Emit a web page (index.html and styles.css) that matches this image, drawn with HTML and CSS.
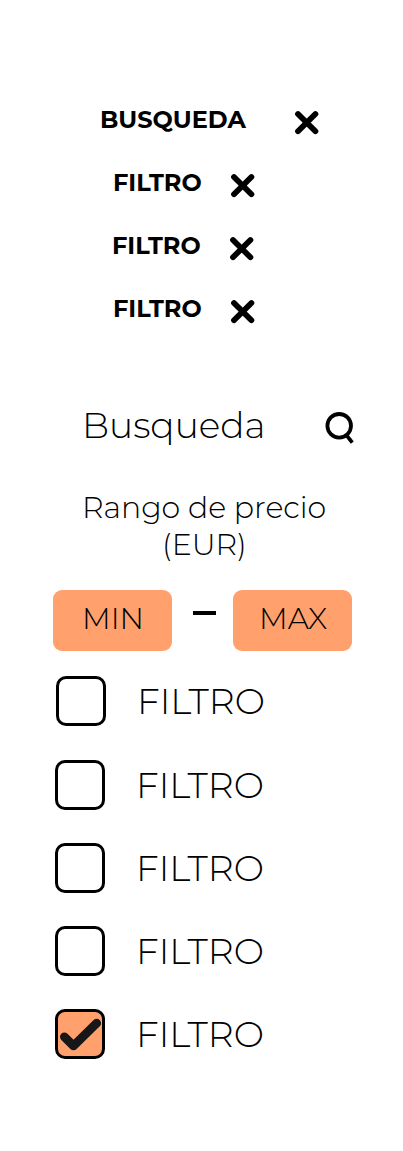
FILE: index.html
```
<!DOCTYPE html>
<html lang="es">
<head>
<meta charset="utf-8">
<title>Filtros</title>
<link rel="stylesheet" href="styles.css">
</head>
<body>
<svg class="defs" aria-hidden="true">
  <symbol id="close" viewBox="0 0 24 24" overflow="visible"><path d="M3 4L20.4 21.2M20.4 4L3 21.2" stroke="#000" stroke-width="5.8" stroke-linecap="round"/></symbol>
</svg>
<main class="panel">
  <section class="chips">
    <div class="chip chip-search"><span class="chip-label chip-label-search">BUSQUEDA</span><svg class="close"><use href="#close"/></svg></div>
    <div class="chip"><span class="chip-label">FILTRO</span><svg class="close"><use href="#close"/></svg></div>
    <div class="chip chip-shifted"><span class="chip-label">FILTRO</span><svg class="close"><use href="#close"/></svg></div>
    <div class="chip"><span class="chip-label">FILTRO</span><svg class="close"><use href="#close"/></svg></div>
  </section>
  <section class="search">
    <span class="search-label">Busqueda</span>
    <svg class="magnifier" viewBox="0 0 30 33"><circle cx="14.2" cy="13.8" r="11.8" fill="none" stroke="#000" stroke-width="3.8"/><path d="M21 22.6L27.3 30.6" stroke="#000" stroke-width="3.8"/></svg>
  </section>
  <h2 class="range-title"><span class="range-main">Rango de precio</span><span class="range-unit">(EUR)</span></h2>
  <section class="range">
    <div class="limit"><span class="min">MIN</span></div>
    <span class="dash"></span>
    <div class="limit"><span class="max">MAX</span></div>
  </section>
  <section class="options">
    <div class="option option-first"><span class="box"></span><span class="option-label">FILTRO</span></div>
    <div class="option"><span class="box"></span><span class="option-label">FILTRO</span></div>
    <div class="option"><span class="box"></span><span class="option-label">FILTRO</span></div>
    <div class="option"><span class="box"></span><span class="option-label">FILTRO</span></div>
    <div class="option"><span class="box box-checked"><svg class="check" viewBox="0 0 44 44"><path d="M6.4 24.8L15.5 33.8L38.7 11.2" fill="none" stroke="#171717" stroke-width="8.8" stroke-linecap="round" stroke-linejoin="round"/></svg></span><span class="option-label">FILTRO</span></div>
  </section>
</main>
</body>
</html>
```
FILE: styles.css
```
* { box-sizing: border-box; }
body {
  margin: 0;
  background: #fff;
  color: #000;
  font-family: Montserrat, Inter, "Open Sans", sans-serif;
  font-weight: 300;
}
.defs { display: none; }
.panel { width: 403px; height: 1151px; padding-top: 110px; overflow: hidden; }
span { white-space: nowrap; }

.chips { display: flex; flex-direction: column; gap: 39px; }
.chip { display: flex; height: 24px; padding-left: 113px; }
.chip-shifted { padding-left: 112px; }
.chip-search { padding-left: 100px; }
.chip-label { width: 118px; padding-top: 1px; font-size: 24px; line-height: 17px; font-weight: 700; }
.chip-label-search { width: 195px; }
.close { width: 24px; height: 24px; overflow: visible; }
.close use { overflow: visible; }

.search { display: flex; margin-top: 89px; padding-left: 82px; height: 78px; }
.search-label { width: 243px; padding-top: 1px; font-size: 36px; line-height: 25px; }
.magnifier { width: 30px; height: 33px; }

.range-title { margin: 7px 0 0; font-size: 30px; font-weight: 300; line-height: 21px; }
.range-title span { display: block; height: 37px; }
.range-main { padding-left: 82px; }
.range-unit { padding-left: 162px; }

.range { display: flex; align-items: center; margin-top: 19px; padding-left: 53px; }
.limit { display: flex; width: 119px; height: 61px; border-radius: 9px; background: #ffa06d; padding-top: 18px; font-size: 30px; line-height: 21px; }
.min { padding-left: 29px; }
.max { padding-left: 26px; }
.dash { width: 23px; height: 4px; margin: 0 17px 15px 21px; background: #000; }

.options { display: flex; flex-direction: column; gap: 33px; margin-top: 25px; padding-left: 55px; }
.option { display: flex; gap: 31px; height: 50px; }
.option-first { padding-left: 1px; margin-bottom: 1px; }
.box { width: 50px; height: 50px; border: 3px solid #000; border-radius: 10px; }
.box-checked { background: #ffa06d; }
.check { display: block; width: 44px; height: 44px; }
.option-label { padding-top: 13px; font-size: 36px; line-height: 25px; }
```
